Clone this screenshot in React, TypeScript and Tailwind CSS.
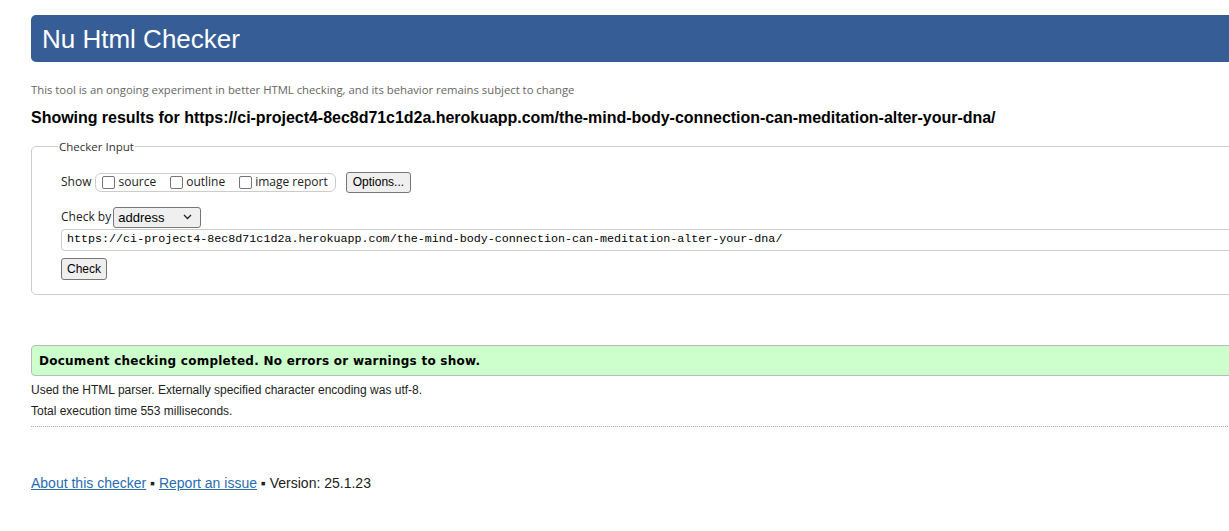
import React from 'react';

const url = 'https://ci-project4-8ec8d71c1d2a.herokuapp.com/the-mind-body-connection-can-meditation-alter-your-dna/';

const ui = { fontFamily: '"Open Sans", "Noto Sans", sans-serif' };
const arial = { fontFamily: '"Liberation Sans", Arial, sans-serif' };

function Box({ label }: { label: string }) {
  return (
    <label className="flex items-center gap-[3px]">
      <span className="w-[13px] h-[13px] rounded-[2px] border border-[#767676] bg-white" />
      <span>{label}</span>
    </label>
  );
}

export default function App() {
  return (
    <div className="w-[1229px] h-[531px] overflow-hidden bg-white text-[#222]" style={arial}>
      <div className="w-[1300px] pl-[31px] pt-[15px]">
        {/* header */}
        <div className="h-[47px] bg-[#365d95] rounded-l-[5px] flex items-center pl-[11px]">
          <h1 className="text-[26px] text-white leading-none">Nu Html Checker</h1>
        </div>

        <p className="mt-[21px] text-[11.3px] text-[#666] leading-[14px]" style={ui}>
          This tool is an ongoing experiment in better HTML checking, and its behavior remains subject to change
        </p>
        <h2 className="mt-[11px] text-[16px] font-bold text-black leading-[20px] tracking-[-0.03px]">
          Showing results for {url}
        </h2>

        {/* checker input */}
        <fieldset className="mt-[10px] border border-[#ccc] rounded-l-[5px] pl-[29px] pb-[14px] text-[12px] text-[#222]" style={ui}>
          <legend className="ml-[-3px] px-[1px] text-[11.5px] text-[#333]">Checker Input</legend>
          <div className="mt-[16px] flex items-center h-[22px]">
            <span className="mr-[4px]">Show</span>
            <div className="flex items-center gap-[14px] h-[19px] border border-[#ccc] rounded-[6px] pl-[6px] pr-[7px]">
              <Box label="source" />
              <Box label="outline" />
              <Box label="image report" />
            </div>
            <button className="ml-[10px] h-[21px] px-[6px] border border-[#767676] rounded-[3px] bg-[#efefef] text-[12px] text-black" style={arial}>
              Options...
            </button>
          </div>
          <div className="mt-[13px] flex items-center h-[22px]">
            <span className="mr-[2px]">Check by</span>
            <div className="w-[88px] h-[21px] border border-[#767676] rounded-[3px] bg-[#efefef] flex items-center justify-between pl-[4px] pr-[8px] text-[13px] text-black" style={arial}>
              <span>address</span>
              <svg width="9" height="6" viewBox="0 0 9 6" fill="none" stroke="#222" strokeWidth="1.3"><path d="M1 1l3.5 3.5L8 1" /></svg>
            </div>
          </div>
          <div className="mt-[1px] h-[22px] border border-[#ccc] rounded-l-[4px] flex items-center pl-[5px] text-[11.7px] text-black" style={{ fontFamily: '"Liberation Mono", "DejaVu Sans Mono", monospace' }}>
            {url}
          </div>
          <button className="mt-[7px] h-[22px] w-[46px] border border-[#767676] rounded-[3px] bg-[#efefef] text-[12px] text-black" style={arial}>
            Check
          </button>
        </fieldset>

        {/* result */}
        <div className="mt-[50px] h-[31px] bg-[#ccffcc] border border-[#bbb] rounded-l-[4px] flex items-center pl-[7px]">
          <span className="text-[12px] font-bold text-black tracking-[0.25px]" style={{ fontFamily: '"DejaVu Sans", Verdana, sans-serif' }}>
            Document checking completed. No errors or warnings to show.
          </span>
        </div>
        <p className="mt-[7px] text-[12px] leading-[15px] text-[#222]">Used the HTML parser. Externally specified character encoding was utf-8.</p>
        <p className="mt-[6px] text-[12px] leading-[15px] text-[#222]">Total execution time 553 milliseconds.</p>
        <div className="mt-[7px] border-t border-dotted border-[#aaa]" />

        <footer className="mt-[46px] text-[14px] text-[#222]">
          <a href="#" className="text-[#2a6cb0] underline">About this checker</a>
          <span> ▪ </span>
          <a href="#" className="text-[#2a6cb0] underline">Report an issue</a>
          <span> ▪ Version: 25.1.23</span>
        </footer>
      </div>
    </div>
  );
}
